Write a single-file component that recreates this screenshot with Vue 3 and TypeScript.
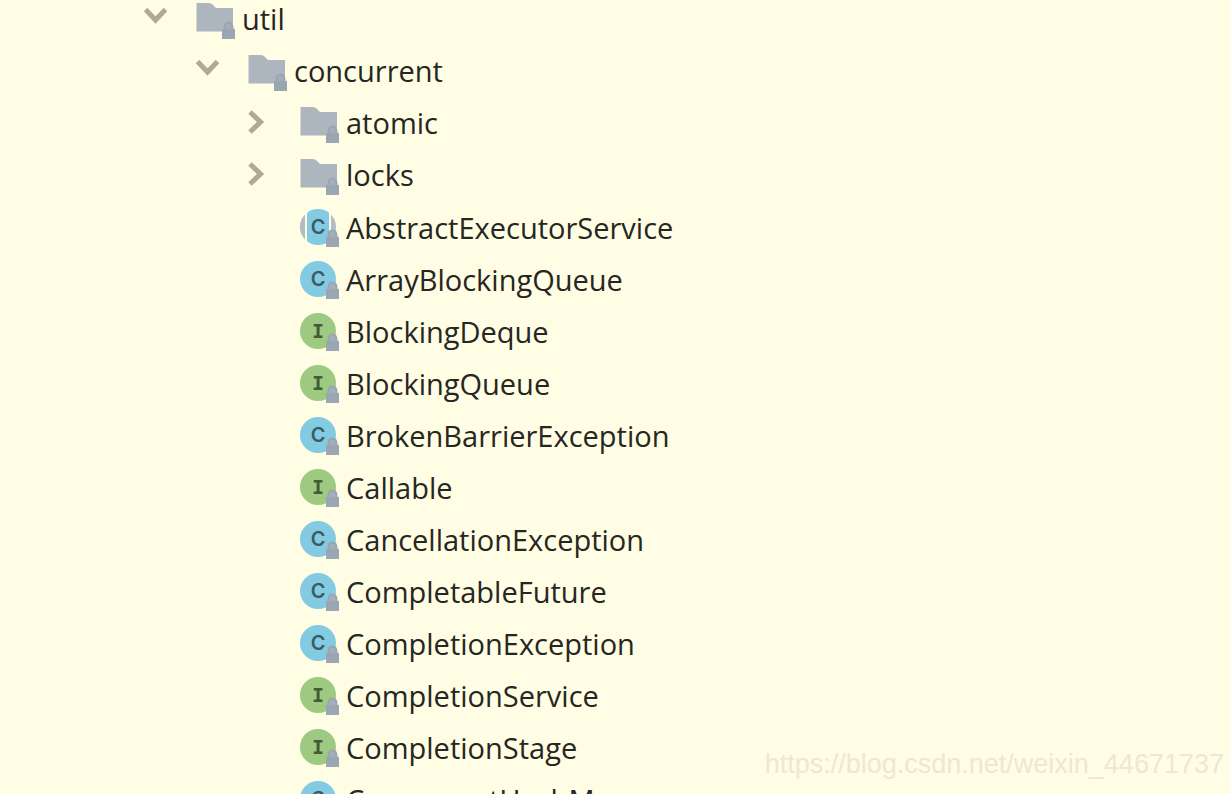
<script setup lang="ts">
import { computed, ref } from 'vue'

type Kind = 'package' | 'class' | 'abstract' | 'interface'

interface Row {
  name: string
  kind: Kind
  level: number
}

const utilOpen = ref(true)
const concurrentOpen = ref(true)

const packages: Row[] = [
  { name: 'atomic', kind: 'package', level: 2 },
  { name: 'locks', kind: 'package', level: 2 },
]

const types: Row[] = [
  { name: 'AbstractExecutorService', kind: 'abstract', level: 2 },
  { name: 'ArrayBlockingQueue', kind: 'class', level: 2 },
  { name: 'BlockingDeque', kind: 'interface', level: 2 },
  { name: 'BlockingQueue', kind: 'interface', level: 2 },
  { name: 'BrokenBarrierException', kind: 'class', level: 2 },
  { name: 'Callable', kind: 'interface', level: 2 },
  { name: 'CancellationException', kind: 'class', level: 2 },
  { name: 'CompletableFuture', kind: 'class', level: 2 },
  { name: 'CompletionException', kind: 'class', level: 2 },
  { name: 'CompletionService', kind: 'interface', level: 2 },
  { name: 'CompletionStage', kind: 'interface', level: 2 },
  { name: 'ConcurrentHashMap', kind: 'class', level: 2 },
]

const rows = computed<Row[]>(() => {
  const list: Row[] = [{ name: 'util', kind: 'package', level: 0 }]
  if (!utilOpen.value) return list
  list.push({ name: 'concurrent', kind: 'package', level: 1 })
  return concurrentOpen.value ? [...list, ...packages, ...types] : list
})

function isOpen(row: Row): boolean {
  if (row.name === 'util') return utilOpen.value
  return row.name === 'concurrent' && concurrentOpen.value
}

function toggle(row: Row): void {
  if (row.name === 'util') utilOpen.value = !utilOpen.value
  if (row.name === 'concurrent') concurrentOpen.value = !concurrentOpen.value
}
</script>

<template>
  <main class="panel">
    <ul class="tree" role="tree">
      <li
        v-for="row in rows"
        :key="row.name"
        class="row"
        :class="[`level-${row.level}`, row.kind]"
        role="treeitem"
        :aria-level="row.level + 1"
      >
        <span class="lead">
          <button
            v-if="row.kind === 'package'"
            class="toggle"
            type="button"
            :aria-label="row.name"
            :aria-expanded="isOpen(row)"
            @click="toggle(row)"
          >
            <svg v-if="isOpen(row)" class="arrow" viewBox="0 0 24 40" aria-hidden="true">
              <path d="M1.500 9.500 L11.500 20 L21.500 9.500" />
            </svg>
            <svg v-else class="arrow" viewBox="0 0 24 40" aria-hidden="true">
              <path d="M5 8 L15.500 18 L5 28" />
            </svg>
          </button>
        </span>

        <svg class="icon" viewBox="0 0 40 40" aria-hidden="true">
          <path
            v-if="row.kind === 'package'"
            class="folder"
            d="M0.500 3 H13 Q15 3 16.500 4.500 L20 8 H37 V31.500 H0.500 Z"
          />
          <template v-else-if="row.kind === 'abstract'">
            <path class="side" d="M5 6.500 A18 18 0 0 0 5 31.500 Z" />
            <path class="side" d="M31 6.500 A18 18 0 0 1 31 31.500 Z" />
            <path class="blue" d="M7 5 Q11 1 18 1 T29 5 V33 Q25 37 18 37 T7 33 Z" />
          </template>
          <circle v-else :class="row.kind === 'interface' ? 'green' : 'blue'" cx="18" cy="19" r="18" />
          <text v-if="row.kind === 'interface'" class="glyph mono" x="18" y="26">I</text>
          <text v-else-if="row.kind !== 'package'" class="glyph" x="18" y="26">C</text>
          <g class="lock">
            <path class="shackle" d="M28.500 30 V27 Q29 22.500 32.500 22.500 T36.500 27 V30" />
            <rect x="26" y="29" width="13" height="10" />
          </g>
        </svg>

        <span class="name">{{ row.name }}</span>
      </li>
    </ul>
    <p class="watermark">https://blog.csdn.net/weixin_44671737</p>
  </main>
</template>

<style>
body {
  margin: 0;
  background: #ffffff;
}
</style>

<style scoped>
.panel {
  position: relative;
  box-sizing: border-box;
  height: 100vh;
  overflow: hidden;
  border-bottom: 1px solid #ffffff;
  background: #fffde3;
  color: #262622;
  font-family: "Open Sans", "Noto Sans", sans-serif;
}

.tree {
  margin: -6px 0 0;
  padding: 0 0 0 144px;
  list-style: none;
}

.row {
  display: flex;
  align-items: center;
  height: 52px;
}

.level-1 {
  padding-left: 52px;
}

.level-2 {
  padding-left: 104px;
}

.lead {
  flex: 0 0 52px;
}

.toggle {
  display: block;
  width: 24px;
  height: 40px;
  padding: 0;
  border: 0;
  background: none;
  cursor: pointer;
}

.arrow {
  display: block;
  width: 24px;
  height: 40px;
  fill: none;
  stroke: #adab93;
  stroke-width: 5;
}

.level-2 .arrow {
  margin-left: -3px;
}

.icon {
  flex: none;
  width: 40px;
  height: 40px;
  margin-right: 6px;
}

.folder {
  fill: #adb6bf;
}

.side {
  fill: #b3bcc2;
}

.blue {
  fill: #83cbe2;
}

.green {
  fill: #9dca80;
}

.glyph {
  fill: #3d5a66;
  font-family: Inter, sans-serif;
  font-size: 20px;
  font-weight: 600;
  text-anchor: middle;
}

.mono {
  fill: #435c38;
  font-family: "DejaVu Sans Mono", monospace;
  font-weight: 700;
}

.lock {
  fill: #9ba6b3;
}

.shackle {
  fill: #a3afba;
  stroke: #9ba6b3;
  stroke-width: 2;
}

.name {
  font-size: 29px;
  line-height: 40px;
  white-space: nowrap;
}

.package .name {
  padding-bottom: 2px;
}

.watermark {
  position: absolute;
  right: 6px;
  bottom: 14px;
  margin: 0;
  color: #ebe8d6;
  font-family: "Liberation Sans", Arial, sans-serif;
  font-size: 27px;
  line-height: 32px;
}
</style>
